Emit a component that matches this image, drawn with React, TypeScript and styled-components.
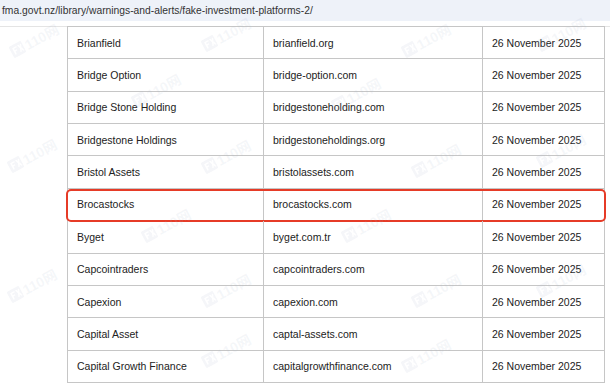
import React from 'react'
import styled, { createGlobalStyle } from 'styled-components'

const GlobalStyle = createGlobalStyle`
  html, body {
    margin: 0;
    padding: 0;
    background: #ffffff;
    overflow: hidden;
  }
  body {
    font-family: "Liberation Sans", Arial, sans-serif;
    color: #222222;
  }
`

const Page = styled.div`
  position: relative;
  width: 610px;
  height: 383px;
  overflow: hidden;
`

const AddressBar = styled.div`
  height: 21px;
  background: #eef2f9;
  padding-left: 2px;
  font-size: 10.3px;
  line-height: 21px;
  color: #333333;
  white-space: nowrap;
`

const Content = styled.div`
  margin-top: 5px;
  border-top: 1px solid #e4e4e4;
  padding-left: 67px;
`

const Table = styled.div`
  width: 536px;
  border-left: 1px solid #c6c6c6;
  border-right: 1px solid #c6c6c6;
  margin-top: -1px;
  border-top: 1px solid #c6c6c6;
`

const Row = styled.div`
  position: relative;
  display: grid;
  grid-template-columns: 195px 219px 1fr;
  height: 32.36px;
  box-sizing: border-box;
  border-bottom: 1px solid #c6c6c6;
`

const Cell = styled.div<{ $divider?: boolean }>`
  display: flex;
  align-items: center;
  padding-left: 9px;
  font-size: 10.5px;
  color: #222222;
  white-space: nowrap;
  border-left: ${(p) => (p.$divider ? '1px solid #c6c6c6' : 'none')};
`

const Highlight = styled.div`
  position: absolute;
  left: -2px;
  right: -2px;
  top: 0px;
  bottom: -2px;
  border: 2px solid #e63b27;
  border-radius: 5px;
  pointer-events: none;
`

const Watermark = styled.div`
  position: absolute;
  display: flex;
  align-items: center;
  gap: 2px;
  transform: rotate(-28deg);
  color: rgba(170, 185, 205, 0.12);
  font-family: "Liberation Sans", "Noto Sans CJK SC", sans-serif;
  font-weight: bold;
  font-size: 14px;
  pointer-events: none;
  white-space: nowrap;
`

const LogoMark = () => (
  <svg width="14" height="13" viewBox="0 0 15 14">
    <path
      fillRule="evenodd"
      fill="currentColor"
      d="M2 0h11a2 2 0 0 1 2 2v10a2 2 0 0 1-2 2H2a2 2 0 0 1-2-2V2a2 2 0 0 1 2-2zM3 3v8h1.6V7.8H7V6.4H4.6V4.4H8V3zM9 3l1.6 4L9 11h1.7l.8-2.2.8 2.2H14l-1.6-4L14 3h-1.7l-.8 2.2L10.7 3z"
    />
  </svg>
)

const rows = [
  ['Brianfield', 'brianfield.org'],
  ['Bridge Option', 'bridge-option.com'],
  ['Bridge Stone Holding', 'bridgestoneholding.com'],
  ['Bridgestone Holdings', 'bridgestoneholdings.org'],
  ['Bristol Assets', 'bristolassets.com'],
  ['Brocastocks', 'brocastocks.com'],
  ['Byget', 'byget.com.tr'],
  ['Capcointraders', 'capcointraders.com'],
  ['Capexion', 'capexion.com'],
  ['Capital Asset', 'captal-assets.com'],
  ['Capital Growth Finance', 'capitalgrowthfinance.com'],
]

// watermark spots, kept mostly off the cell texts
const marks = [
  [8, 30], [200, 24], [400, 30], [535, 24],
  [130, 80], [330, 84],
  [6, 145], [200, 146], [410, 150], [535, 140],
  [140, 215], [340, 215],
  [6, 275], [200, 280], [410, 280], [535, 270],
  [200, 340], [400, 345],
]

export default function App() {
  return (
    <Page>
      <GlobalStyle />
      <AddressBar>fma.govt.nz/library/warnings-and-alerts/fake-investment-platforms-2/</AddressBar>
      <Content>
        <Table>
          {rows.map(([name, site]) => (
            <Row key={name}>
              <Cell>{name}</Cell>
              <Cell $divider>{site}</Cell>
              <Cell $divider>26 November 2025</Cell>
              {name === 'Brocastocks' ? <Highlight /> : null}
            </Row>
          ))}
        </Table>
      </Content>
      {marks.map(([x, y]) => (
        <Watermark key={`${x}-${y}`} style={{ left: x, top: y }}>
          <LogoMark />
          110网
        </Watermark>
      ))}
    </Page>
  )
}
